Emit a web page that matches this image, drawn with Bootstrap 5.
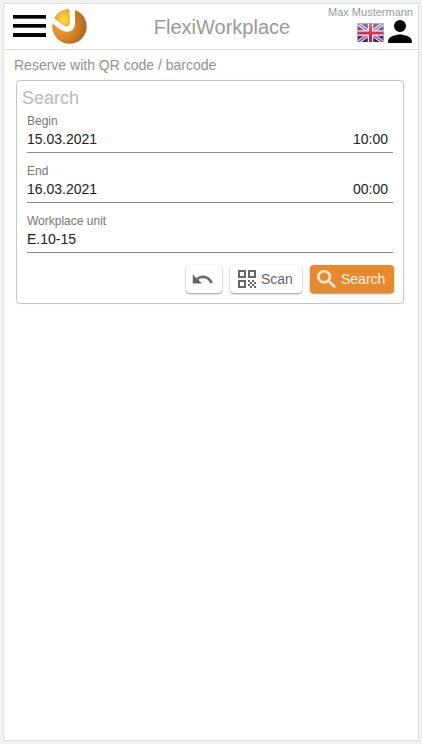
<!DOCTYPE html>
<html lang="en">
<head>
<meta charset="utf-8">
<meta name="viewport" content="width=device-width, initial-scale=1">
<title>FlexiWorkplace</title>
<link href="https://cdn.jsdelivr.net/npm/bootstrap@5.3.0/dist/css/bootstrap.min.css" rel="stylesheet">
<style>
html, body { height: 100%; }
body { background: #f2f2f2; font-family: "Liberation Sans", Arial, sans-serif; font-size: 14px; line-height: 16px; padding: 3px; overflow: hidden; }
svg { display: block; flex: none; }
.app-frame { height: 738px; width: 416px; border: 1px solid #dedede; }
.app-header { height: 46px; border-bottom: 1px solid #dedede; display: grid; grid-template-columns: 1fr auto 1fr; }
.icon-btn { border: 0; background: none; padding: 0; }
.brand-side { padding: 5px 0 0 9px; gap: 6px; }
.app-title { font-size: 20px; line-height: 24px; color: #999; margin: 11px 0 0 22px; font-weight: 400; }
.user-side { padding: 2px 5px 0 0; }
.user-name { font-size: 11px; line-height: 13px; color: #999; }
.user-icons { gap: 4px; margin-right: 1px; }
.page-title { font-size: 14px; line-height: 16px; color: #929292; margin: 7px 0 0 10px; font-weight: 400; }
.search-card { margin: 7px 14px 0 12px; height: 224px; border: 1px solid #c4c4c4; border-radius: 4px; padding: 7px 10px 0 10px; box-shadow: 0 0 1px #ccc; }
.search-title { font-size: 18px; line-height: 20px; color: #bababa; margin: 0 0 0 -5px; font-weight: 400; }
.field { height: 50px; border-bottom: 1px solid #888; padding: 10px 5px 0 0; color: #212121; }
.field:first-of-type { height: 45px; padding-top: 5px; }
.field label { display: block; font-size: 12px; line-height: 16px; color: #757575; }
.field-value { padding-top: 2px; line-height: 16px; }
.actions { gap: 8px; margin: 12px -1px 0 0; }
.action { height: 28px; border: 0; border-radius: 4px; padding: 0 8px; font-size: 14px; line-height: 16px; color: #666; background: #fff; box-shadow: 0 1px 2px rgba(0,0,0,.4), 0 0 1px rgba(0,0,0,.12); }
.action:hover { background: #fff; }
.action-undo { width: 36px; padding: 0 6px; }
.action-scan { width: 72px; gap: 5px; }
.action-search, .action-search:hover { width: 84px; gap: 5px; background: #e78a2e; color: #fff3e6; padding: 0 7px; }
</style>
</head>
<body>
<div class="app-frame bg-white">
  <header class="app-header">
    <div class="brand-side d-flex align-items-start">
      <button class="icon-btn" aria-label="Menu">
        <svg width="33" height="35" viewBox="0 0 33 35"><path d="M0 6h33v3H0zM0 15h33v3H0zM0 24h33v4H0z"/><path fill="#555" d="M0 9h33v1H0zM0 18h33v1H0z"/></svg>
      </button>
      <svg width="35" height="35" viewBox="0 0 35 35">
        <defs>
          <radialGradient id="ball" cx=".25" cy=".45" r=".8"><stop offset="0" stop-color="#f3a638"/><stop offset=".5" stop-color="#d98728"/><stop offset="1" stop-color="#a5621c"/></radialGradient>
          <radialGradient id="wedge" cx=".6" cy=".65" r=".7"><stop offset="0" stop-color="#ffe23a"/><stop offset="1" stop-color="#efa02d"/></radialGradient>
        </defs>
        <circle cx="17.500" cy="17.500" r="17.200" fill="url(#ball)"/>
        <path d="M20.300 -3V14Q20.300 20 14.500 20Q12 20 9.500 18L-2 9.500" fill="none" stroke="#fff" stroke-width="5.400"/>
        <path d="M0 0H20V-2H-4V10L2 8ZM22.500 0H16V6H22.500Z" fill="#fff"/>
        <path d="M3.300 8.200Q8 1.200 17.500 .3V14Q17 17 13.500 16.700Q12.500 16.500 11.500 15.700Z" fill="url(#wedge)"/>
      </svg>
    </div>
    <h1 class="app-title">FlexiWorkplace</h1>
    <div class="user-side d-flex flex-column align-items-end">
      <div class="user-name text-nowrap">Max Mustermann</div>
      <div class="user-icons d-flex align-items-start">
        <svg class="mt-1" width="27" height="20" viewBox="0 0 27 20">
          <defs><clipPath id="fc"><rect x=".5" y=".5" width="26" height="18.500"/></clipPath><linearGradient id="sheen" x2="0" y2="1"><stop offset="0" stop-color="#fff" stop-opacity=".4"/><stop offset=".5" stop-color="#fff" stop-opacity=".12"/><stop offset="1" stop-color="#fff" stop-opacity="0"/></linearGradient></defs>
          <g clip-path="url(#fc)"><path fill="#1c2e80" d="M0 0h27v20H0z"/><path d="M0 0l27 20M27 0L0 20" stroke="#e0e0ee" stroke-width="3.600"/><path d="M0 0l27 20M27 0L0 20" stroke="#d22844" stroke-width="1.400"/><path d="M13.500 0v20M0 10h27" stroke="#f2f2f6" stroke-width="5.400"/><path d="M13.500 0v20M0 10h27" stroke="#d0143a" stroke-width="3"/><path fill="url(#sheen)" d="M0 0h27v20H0z"/></g>
        </svg>
        <button class="icon-btn" aria-label="Account"><svg width="24" height="25" viewBox="0 0 24 25"><circle cx="12" cy="6.900" r="6"/><path d="M.2 24V21.500C.2 17.500 8 15.400 12 15.400S23.800 17.500 23.800 21.500V24Z"/></svg></button>
      </div>
    </div>
  </header>
  <main>
    <h2 class="page-title">Reserve with QR code / barcode</h2>
    <section class="search-card">
      <h3 class="search-title">Search</h3>
      <div class="field"><label>Begin</label><div class="field-value d-flex justify-content-between"><span>15.03.2021</span><span>10:00</span></div></div>
      <div class="field"><label>End</label><div class="field-value d-flex justify-content-between"><span>16.03.2021</span><span>00:00</span></div></div>
      <div class="field"><label>Workplace unit</label><div class="field-value">E.10-15</div></div>
      <div class="actions d-flex justify-content-end">
        <button class="action action-undo btn d-flex align-items-center" aria-label="Reset"><svg width="23" height="23" viewBox="1 0 24 24" fill="#666" stroke="#666" stroke-width=".4"><path d="M12.500 8c-2.650 0-5.050.99-6.900 2.600L2 7v9h9l-3.620-3.620c1.390-1.160 3.160-1.880 5.120-1.880 3.540 0 6.550 2.310 7.600 5.500l2.370-.78C21.080 11.030 17.150 8 12.500 8z"/></svg></button>
        <button class="action action-scan btn d-flex align-items-center"><svg width="18" height="18" viewBox="0 0 18 18" fill="#666"><path fill-rule="evenodd" d="M0 0h8v8H0zM2 2v4h4V2zM10 0h8v8h-8zM12 2v4h4V2zM0 10h8v8H0zM2 12v4h4v-4zM10 10h2v2h-2zM12 12h2v2h-2zM14 10h2v2h-2zM16 12h2v2h-2zM10 14h2v2h-2zM12 16h2v2h-2zM14 14h2v2h-2zM16 16h2v2h-2z"/></svg><span>Scan</span></button>
        <button class="action action-search btn d-flex align-items-center"><svg width="19" height="18" viewBox="2.700 2.700 18.100 18.100" preserveAspectRatio="none" fill="#fff0df" stroke="#fff0df" stroke-width=".5"><path d="M15.500 14h-.79l-.28-.27C15.410 12.590 16 11.110 16 9.500 16 5.910 13.090 3 9.500 3S3 5.910 3 9.500 5.910 16 9.500 16c1.610 0 3.090-.59 4.230-1.570l.27.28v.79l5 4.990L20.490 19l-4.990-5zm-6 0C7.010 14 5 11.990 5 9.500S7.010 5 9.500 5 14 7.010 14 9.500 11.990 14 9.500 14z"/></svg><span>Search</span></button>
      </div>
    </section>
  </main>
</div>
<script src="https://cdn.jsdelivr.net/npm/bootstrap@5.3.0/dist/js/bootstrap.bundle.min.js"></script>
</body>
</html>
